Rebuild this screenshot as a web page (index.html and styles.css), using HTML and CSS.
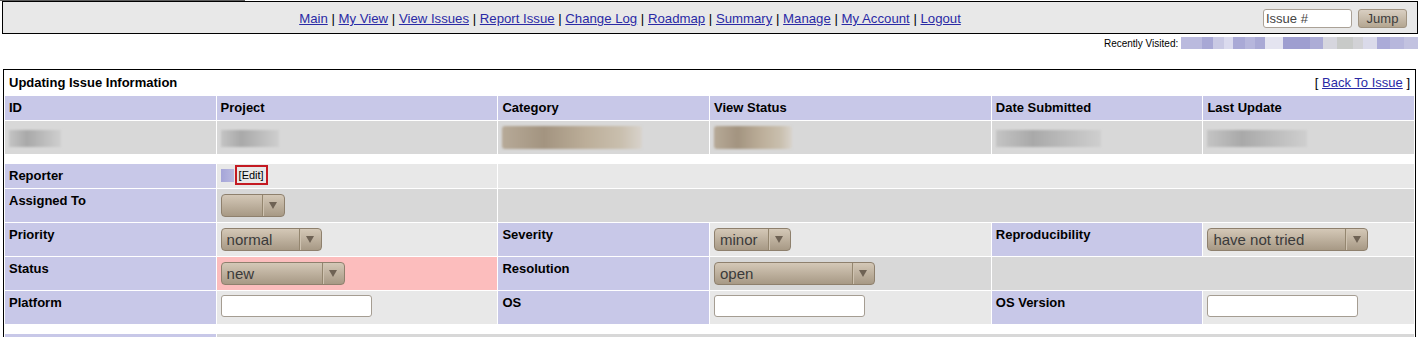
FILE: index.html
```html
<!DOCTYPE html>
<html lang="en">
<head>
  <meta charset="UTF-8" />
  <title>Update Issue</title>
  <link rel="stylesheet" href="styles.css">
</head>
<body>

  <div class="topline"></div>

  <div class="page">
    <!-- Main menu -->
    <div class="menu">
      <div class="menu-links">
        <a href="#">Main</a> | <a href="#">My View</a> | <a href="#">View Issues</a> | <a href="#">Report Issue</a> | <a href="#">Change Log</a> | <a href="#">Roadmap</a> | <a href="#">Summary</a> | <a href="#">Manage</a> | <a href="#">My Account</a> | <a href="#">Logout</a>
      </div>
      <form class="jump">
        <input type="text" class="jump-input" value="Issue #" />
        <button type="button" class="btn">Jump</button>
      </form>
    </div>

    <div class="recent">Recently Visited: <span class="recent-list"></span></div>

    <!-- Update form -->
    <table class="issue">
      <colgroup>
        <col class="c15"><col class="c20"><col class="c15"><col class="c20"><col class="c15"><col class="c15">
      </colgroup>
      <tr class="title">
        <td colspan="3">Updating Issue Information</td>
        <td colspan="3" class="right">[ <a href="#">Back To Issue</a> ]</td>
      </tr>
      <tr class="row-category">
        <td>ID</td>
        <td>Project</td>
        <td>Category</td>
        <td>View Status</td>
        <td>Date Submitted</td>
        <td>Last Update</td>
      </tr>
      <tr class="row-1">
        <td><span class="blur blur-id"></span></td>
        <td><span class="blur blur-project"></span></td>
        <td><span class="blur blur-sel blur-category"></span></td>
        <td><span class="blur blur-sel blur-view"></span></td>
        <td><span class="blur blur-date"></span></td>
        <td><span class="blur blur-update"></span></td>
      </tr>
      <tr class="spacer"><td colspan="6"></td></tr>

      <tr class="row-2">
        <td class="category">Reporter</td>
        <td><span class="blur-name"></span><span class="edit">[Edit]</span></td>
        <td colspan="4"></td>
      </tr>
      <tr class="row-1">
        <td class="category">Assigned To</td>
        <td>
          <span class="sel sel-assign"><select><option></option></select><span class="sel-arrow"><svg width="8" height="7" viewBox="0 0 8 7"><polygon points="0,0 8,0 4,7" /></svg></span></span>
        </td>
        <td colspan="4"></td>
      </tr>
      <tr class="row-2">
        <td class="category">Priority</td>
        <td>
          <span class="sel sel-priority"><select><option>normal</option></select><span class="sel-arrow"><svg width="8" height="7" viewBox="0 0 8 7"><polygon points="0,0 8,0 4,7" /></svg></span></span>
        </td>
        <td class="category">Severity</td>
        <td>
          <span class="sel sel-severity"><select><option>minor</option></select><span class="sel-arrow"><svg width="8" height="7" viewBox="0 0 8 7"><polygon points="0,0 8,0 4,7" /></svg></span></span>
        </td>
        <td class="category">Reproducibility</td>
        <td>
          <span class="sel sel-repro"><select><option>have not tried</option></select><span class="sel-arrow"><svg width="8" height="7" viewBox="0 0 8 7"><polygon points="0,0 8,0 4,7" /></svg></span></span>
        </td>
      </tr>
      <tr class="row-1">
        <td class="category">Status</td>
        <td class="status-new">
          <span class="sel sel-status"><select><option>new</option></select><span class="sel-arrow"><svg width="8" height="7" viewBox="0 0 8 7"><polygon points="0,0 8,0 4,7" /></svg></span></span>
        </td>
        <td class="category">Resolution</td>
        <td>
          <span class="sel sel-resolution"><select><option>open</option></select><span class="sel-arrow"><svg width="8" height="7" viewBox="0 0 8 7"><polygon points="0,0 8,0 4,7" /></svg></span></span>
        </td>
        <td colspan="2"></td>
      </tr>
      <tr class="row-2">
        <td class="category">Platform</td>
        <td><input type="text" class="field" /></td>
        <td class="category">OS</td>
        <td><input type="text" class="field" /></td>
        <td class="category">OS Version</td>
        <td><input type="text" class="field" /></td>
      </tr>
      <tr class="spacer"><td colspan="6"></td></tr>

      <tr class="row-1">
        <td class="category">Summary</td>
        <td colspan="5"><input type="text" class="field field-wide" /></td>
      </tr>
    </table>
  </div>

</body>
</html>
```

FILE: styles.css
```css
body {
  margin: 0;
  font-family: "Liberation Sans", Arial, sans-serif;
  font-size: 13px;
  color: #000;
  background: #fff;
}
a {
  color: #2a2aa5;
}
.topline {
  width: 245px;
  height: 1px;
  background: #5e5e5e;
}
.page {
  padding: 0 4px 0 2px;
}

/* Menu bar */
.menu {
  display: flex;
  align-items: center;
  height: 33px;
  box-sizing: border-box;
  border: 1px solid #000;
  background: #e8e8e8;
}
.menu-links {
  flex: 1;
  text-align: center;
  font-size: 13.2px;
  padding-top: 2px;
}
.jump {
  display: flex;
  gap: 6px;
  margin: 0;
  padding: 1px 10px 0 6px;
}
.jump-input {
  width: 89px;
  height: 19px;
  box-sizing: border-box;
  border: 1px solid #aaa196;
  border-radius: 3px;
  padding: 0 2px;
  font: 13px "Liberation Sans", Arial, sans-serif;
  color: #444;
  background: #fff;
}
.btn {
  width: 49px;
  height: 19px;
  box-sizing: border-box;
  border: 1px solid #a09381;
  border-radius: 3px;
  background: linear-gradient(#d9cfc2, #b4a691);
  font: 13px "Liberation Sans", Arial, sans-serif;
  color: #3c3c3c;
  padding: 0;
}
.recent {
  text-align: right;
  font-size: 10px;
  line-height: 14px;
  margin-top: 3px;
}
.recent-list {
  display: inline-block;
  width: 237px;
  height: 12px;
  vertical-align: -2px;
  background: linear-gradient(90deg,
    #babade 0, #babade 21px, #a8a8d5 21px, #a8a8d5 32px, #c9c9e4 32px, #c9c9e4 43px,
    #dadaee 43px, #dadaee 52px, #a9a9d6 52px, #a9a9d6 64px, #b6b6dc 64px, #b6b6dc 74px,
    #a9a9d5 74px, #a9a9d5 84px, #e4e4f0 84px, #e4e4f0 102px, #9e9ed0 102px, #9e9ed0 129px,
    #acacd6 129px, #acacd6 142px, #d6d6de 142px, #d6d6de 156px, #c8cac8 156px, #c8cac8 172px,
    #d2d2d6 172px, #d2d2d6 182px, #dadaea 182px, #dadaea 196px, #ababd8 196px, #ababd8 209px,
    #b7b7dc 209px, #b7b7dc 223px, #c2c2e0 223px);
}

/* Issue table */
.issue {
  width: calc(100% - 3px);
  margin: 18px 0 0 1px;
  border: 1px solid #000;
  border-spacing: 1px;
  table-layout: fixed;
}
.c15 {
  width: 15%;
}
.c20 {
  width: 20%;
}
.issue td {
  padding: 4px;
  line-height: 16px;
  vertical-align: top;
}
.title td {
  font-weight: bold;
}
.title td.right {
  font-weight: normal;
  text-align: right;
}
.row-category td, .category {
  background: #c8c8e8;
  font-weight: bold;
}
.row-1 td {
  background: #d8d8d8;
}
.row-2 td {
  background: #e8e8e8;
}
.row-1 td.category, .row-2 td.category {
  background: #c8c8e8;
}
.row-1 td.status-new {
  background: #fcbdbd;
}
.issue .spacer td {
  height: 0;
  padding: 4px 0;
  background: #fff;
}

/* Redacted values */
.blur {
  display: block;
  height: 17px;
  margin: 5px 0 3px;
  filter: blur(1px);
  background: linear-gradient(90deg, #c4c4c4, #a9a9a9 35%, #b8b8b8 60%, #cfcfcf);
}
.blur-id {
  width: 52px;
}
.blur-project {
  width: 58px;
}
.blur-date {
  width: 105px;
}
.blur-update {
  width: 100px;
}
.blur-sel {
  height: 23px;
  margin: 1px 0;
  border-radius: 3px;
  background: linear-gradient(90deg, #b7aa98, #a39480 30%, #bcae99 60%, #c9bfae 85%, #d8d3cc);
}
.blur-category {
  width: 140px;
}
.blur-view {
  width: 78px;
}
.blur-name {
  display: inline-block;
  width: 13px;
  height: 13px;
  vertical-align: -2px;
  background: linear-gradient(90deg, #a5a5d8, #b9b9e0);
}
.edit {
  display: inline-block;
  margin: -3px 0 -3px 1px;
  padding: 1px 2px;
  border: 2px solid #c41a22;
  font-size: 11px;
  line-height: 14px;
  vertical-align: top;
}

/* Drop-downs */
.sel {
  display: inline-flex;
  height: 23px;
  margin: 1px 0;
  box-sizing: border-box;
  border: 1px solid #8e806d;
  border-radius: 4px;
  background: linear-gradient(#d4c8b7, #a79985);
  vertical-align: top;
  overflow: hidden;
}
.sel select {
  appearance: none;
  flex: 1;
  min-width: 0;
  height: 100%;
  border: 0;
  margin: 0;
  padding: 0 5px;
  background: transparent;
  font: 15px "Liberation Sans", Arial, sans-serif;
  color: #3a3a3a;
}
.sel-arrow {
  display: flex;
  align-items: center;
  justify-content: center;
  width: 21px;
  border-left: 1px solid #94866f;
  box-shadow: inset 1px 0 #cfc3b1;
}
.sel-arrow polygon {
  fill: #6e6254;
}
.sel-assign {
  width: 64px;
}
.sel-priority {
  width: 101px;
}
.sel-status {
  width: 124px;
}
.sel-severity {
  width: 77px;
}
.sel-resolution, .sel-repro {
  width: 161px;
}

/* Text inputs */
.field {
  display: block;
  width: 151px;
  height: 22px;
  margin: 0 0 3px;
  box-sizing: border-box;
  border: 1px solid #a59d92;
  border-radius: 3px;
  background: #fff;
  font: 13px "Liberation Sans", Arial, sans-serif;
}
.field-wide {
  width: 600px;
}
```
